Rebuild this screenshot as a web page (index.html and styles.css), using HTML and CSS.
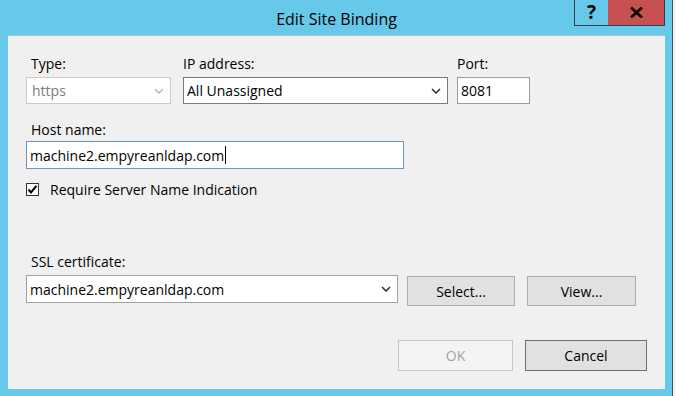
FILE: index.html
```html
<!DOCTYPE html>
<html lang="en">

<head>
  <meta charset="UTF-8">
  <title>Edit Site Binding</title>
  <link rel="stylesheet" href="styles.css">
</head>

<body>
  <div class="screen">
    <div class="dialog">
      <header class="titlebar">
        <span></span>
        <h1 class="title">Edit Site Binding</h1>
        <div class="caption-buttons">
          <div class="caption-btn help">?</div>
          <div class="caption-btn close">
            <svg width="13" height="11" viewBox="0 0 13 11">
              <path d="M1 0.5 L12 10.5 M12 0.5 L1 10.5" stroke="#000" stroke-width="2.6" fill="none" />
            </svg>
          </div>
        </div>
      </header>

      <main class="client">
        <div class="fields">
          <div class="field">
            <label class="label label-inset">Type:</label>
            <div class="combo combo-type disabled">
              <span>https</span>
              <svg class="chevron" width="10" height="6" viewBox="0 0 10 6">
                <polyline points="1,1 5,5 9,1" stroke="#b4b4b4" stroke-width="1.4" fill="none" />
              </svg>
            </div>
          </div>
          <div class="field field-ip">
            <label class="label">IP address:</label>
            <div class="combo combo-ip">
              <span>All Unassigned</span>
              <svg class="chevron" width="10" height="6" viewBox="0 0 10 6">
                <polyline points="1,1 5,5 9,1" stroke="#333" stroke-width="1.6" fill="none" />
              </svg>
            </div>
          </div>
          <div class="field field-port">
            <label class="label">Port:</label>
            <div class="textbox textbox-port">8081</div>
          </div>
        </div>

        <div class="host">
          <label class="label label-inset">Host name:</label>
          <div class="textbox textbox-host focused">machine2.empyreanldap.com<span class="caret"></span></div>
        </div>

        <div class="check-row">
          <span class="checkbox">
            <svg width="11" height="11" viewBox="0 0 11 11">
              <polyline points="1.5,5.5 4,8.5 9.5,1.8" stroke="#000" stroke-width="2" fill="none" />
            </svg>
          </span>
          <span>Require Server Name Indication</span>
        </div>

        <div class="ssl">
          <label class="label label-inset">SSL certificate:</label>
          <div class="ssl-row">
            <div class="combo combo-ssl">
              <span>machine2.empyreanldap.com</span>
              <svg class="chevron" width="10" height="6" viewBox="0 0 10 6">
                <polyline points="1,1 5,5 9,1" stroke="#333" stroke-width="1.6" fill="none" />
              </svg>
            </div>
            <div class="button btn-select">Select...</div>
            <div class="button btn-view">View...</div>
          </div>
        </div>

        <div class="actions">
          <div class="button btn-ok disabled">OK</div>
          <div class="button btn-cancel">Cancel</div>
        </div>
      </main>
    </div>
    <div class="backdrop"></div>
  </div>
</body>

</html>
```

FILE: styles.css
```css
html {
  box-sizing: border-box;
  font-family: 'Open Sans', 'DejaVu Sans', sans-serif;
  font-size: 14px;
}

*,
*:after,
*:before {
  box-sizing: inherit;
}

body {
  margin: 0;
  width: 676px;
  height: 396px;
  overflow: hidden;
  color: #000;
}

.screen {
  display: flex;
  height: 396px;
}

.dialog {
  display: flex;
  flex-direction: column;
  width: 672px;
  height: 396px;
  padding: 0 7px 7px 8px;
  background-color: #66c9ea;
}

.backdrop {
  flex: 1;
  border-left: 1px solid #4a4a4a;
  background-color: #f2f2f2;
}

/* title bar */
.titlebar {
  display: grid;
  grid-template-columns: 1fr auto 1fr;
  height: 35px;
}

.title {
  margin: 0;
  padding-top: 8px;
  font-size: 16px;
  font-weight: 400;
  line-height: 22px;
  white-space: nowrap;
}

.caption-buttons {
  display: flex;
  justify-self: end;
  align-self: start;
}

.caption-btn {
  display: flex;
  align-items: center;
  justify-content: center;
  height: 26px;
  border-bottom: 1px solid #2f3f48;
}

.help {
  width: 34px;
  border-left: 1px solid #2f3f48;
  font-size: 19px;
  font-weight: 700;
  line-height: 1;
}

.close {
  width: 57px;
  border-right: 1px solid #2f3f48;
  background-color: #c75050;
}

/* client area */
.client {
  flex: 1;
  padding: 19px 18px 0;
  background-color: #f0f0f0;
  border-top: 1px solid #9ec9da;
}

.label {
  display: block;
  line-height: 19px;
}

.label-inset {
  padding-left: 5px;
}

.fields {
  display: flex;
  margin-top: -1px;
}

.field {
  display: flex;
  flex-direction: column;
  gap: 4px;
}

.field-ip {
  margin-left: 12px;
}

.field-port {
  margin-left: 9px;
}

.combo,
.textbox {
  display: flex;
  align-items: center;
  padding-left: 3px;
  background-color: #fff;
  border: 1px solid #a8a8a8;
  line-height: 19px;
  white-space: nowrap;
}

.combo span {
  flex: 1;
}

.chevron {
  margin-right: 6px;
}

.combo-type {
  width: 145px;
  height: 27px;
  padding-left: 5px;
}

.combo.disabled {
  border-color: #cbcbcb;
  color: #7d7d7d;
}

.combo-ip {
  width: 265px;
  height: 27px;
  border-color: #7a7a7a;
}

.textbox-port {
  width: 73px;
  height: 27px;
  border-color: #9a9a9a;
}

.host {
  display: flex;
  flex-direction: column;
  gap: 2px;
  margin-top: 16px;
}

.textbox-host {
  width: 378px;
  height: 28px;
}

.textbox.focused {
  border-color: #6f95bd;
}

.caret {
  display: inline-block;
  width: 1px;
  height: 18px;
  margin-left: 1px;
  background-color: #000;
}

.check-row {
  display: flex;
  align-items: flex-start;
  gap: 11px;
  margin-top: 11px;
  line-height: 19px;
}

.checkbox {
  display: flex;
  align-items: center;
  justify-content: center;
  width: 13px;
  height: 13px;
  margin-top: 3px;
  background-color: #fff;
  border: 1px solid #333;
}

.ssl {
  display: flex;
  flex-direction: column;
  gap: 4px;
  margin-top: 53px;
}

.ssl-row {
  display: flex;
  align-items: flex-start;
}

.combo-ssl {
  width: 372px;
  height: 28px;
  border-color: #a0a0a0;
}

.button {
  display: flex;
  align-items: center;
  justify-content: center;
  background-color: #e1e1e1;
  border: 1px solid #adadad;
  line-height: 19px;
}

.btn-select {
  width: 108px;
  height: 30px;
  margin: 1px 0 0 9px;
}

.btn-view {
  width: 109px;
  height: 30px;
  margin: 1px 0 0 12px;
}

.actions {
  display: flex;
  justify-content: flex-end;
  gap: 12px;
  margin-top: 34px;
}

.btn-ok {
  width: 115px;
  height: 31px;
}

.button.disabled {
  background-color: #f4f4f4;
  border-color: #c6c6c6;
  color: #a3a3a3;
}

.btn-cancel {
  width: 122px;
  height: 31px;
  border-color: #707070;
}
```
